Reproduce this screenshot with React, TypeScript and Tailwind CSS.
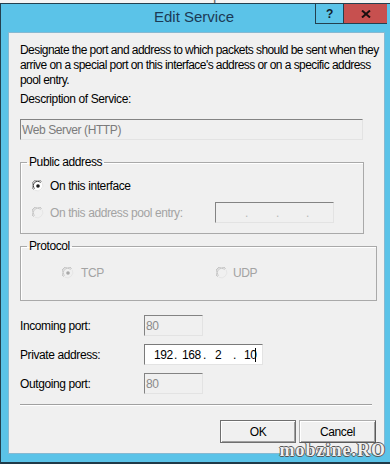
import type { ReactNode } from "react";

function Radio({ checked, disabled }: { checked?: boolean; disabled?: boolean }) {
  const outerDark = disabled ? "#b4b4b4" : "#7a7a7a";
  const innerDark = disabled ? "#c8c8c8" : "#404040";
  const dot = disabled ? "#a8a8a8" : "#1a1a1a";
  return (
    <svg width="12" height="12" viewBox="0 0 12 12" className="shrink-0">
      <circle cx="6" cy="6" r="5" fill={disabled ? "#f0f0f0" : "#ffffff"} />
      <path d="M1.5 9.5 A5.5 5.5 0 0 1 9.5 1.5" fill="none" stroke={outerDark} strokeWidth="1" />
      <path d="M2.6 8.6 A4.2 4.2 0 0 1 8.6 2.6" fill="none" stroke={innerDark} strokeWidth="1" />
      <path d="M10.2 2.8 A5.5 5.5 0 0 1 2.8 10.2" fill="none" stroke="#e6e6e6" strokeWidth="1" />
      {checked && <circle cx="6" cy="6" r="1.8" fill={dot} />}
    </svg>
  );
}

function Group({ title, width, children }: { title: string; width: string; children: ReactNode }) {
  return (
    <fieldset className={["border border-[#a9a9a9] shadow-[inset_1px_1px_0_#ffffff]", width].join(" ")}>
      <legend className="ml-[6px] px-[2px] leading-[15px] text-[#000]">{title}</legend>
      {children}
    </fieldset>
  );
}

const sunken = "border border-t-[#838383] border-l-[#838383] border-b-[#e3e3e3] border-r-[#e3e3e3]";

function PortRow({ label, children }: { label: string; children: ReactNode }) {
  return (
    <div className="flex h-[21px] items-center">
      <div className="w-[124px]">{label}</div>
      {children}
    </div>
  );
}

export default function App() {
  return (
    <div className="h-[464px] w-[390px] overflow-hidden bg-white font-['Liberation_Sans',Arial,sans-serif] text-[12px] tracking-[-0.4px] text-black">
      {/* window behind, only its title bottom shows */}
      <div className="h-[3px] overflow-hidden bg-[#f4f4f4]">
        <div className="-mt-[13px] text-center text-[15px] leading-[15px] text-[#6a6a6a]">Forward Properties</div>
      </div>

      <div className="flex h-[461px] flex-col border-l border-t border-[#23404f] bg-[#5bc3e8]">
        <div className="flex h-[28px] shrink-0">
          <div className="flex flex-1 items-center justify-center pb-[2px] pl-[72px] text-[15px] tracking-normal text-[#1b3a55]">Edit Service</div>
          <div className="flex h-[20px] w-[28px] items-center justify-center border-b border-l border-[#23404f] bg-[#5bc3e8] text-[12px] font-bold text-[#10202c]">
            ?
          </div>
          <div className="mr-[3px] flex h-[20px] w-[44px] items-center justify-center border-b border-l border-[#23404f] bg-[#c7504f]">
            <svg width="10" height="8" viewBox="0 0 10 8">
              <path d="M1 0.5 L9 7.5 M9 0.5 L1 7.5" stroke="#1a0f0f" strokeWidth="2" />
            </svg>
          </div>
        </div>

        <div className="ml-[7px] mr-[5px] flex flex-1 flex-col border border-[#86b9d2] bg-[#f0f0f0] pl-[11px]">
          <p className="mt-[10px] whitespace-nowrap leading-[15px] tracking-[-0.56px]">
            Designate the port and address to which packets should be sent when they
            <br />
            arrive on a special port on this interface's address or on a specific address
            <br />
            pool entry.
          </p>
          <div className="mt-[4px] leading-[15px]">Description of Service:</div>
          <div className={["mt-[12px] flex h-[21px] w-[343px] items-center bg-[#f0f0f0] pl-[1px] text-[#7b7b7b]", sunken].join(" ")}>
            Web Server (HTTP)
          </div>

          <div className="mt-[15px]">
            <Group title="Public address" width="w-[344px]">
              <div className="flex flex-col gap-[8px] pb-[10px] pl-[11px] pt-[8px]">
                <div className="flex h-[16px] items-center gap-[6px]">
                  <Radio checked />
                  <span>On this interface</span>
                </div>
                <div className="flex h-[21px] items-center">
                  <div className="flex w-[183px] items-center gap-[6px] text-[#a3a3a3]">
                    <Radio disabled />
                    <span>On this address pool entry:</span>
                  </div>
                  <div className={["flex h-[21px] w-[119px] items-center bg-[#f0f0f0] text-[#b8b8b8]", sunken].join(" ")}>
                    <span className="ml-[29px]">.</span>
                    <span className="ml-[28px]">.</span>
                    <span className="ml-[27px]">.</span>
                  </div>
                </div>
              </div>
            </Group>
          </div>

          <div className="mt-[5px]">
            <Group title="Protocol" width="w-[357px]">
              <div className="mb-[19px] mt-[11px] flex h-[16px] items-center pl-[41px] text-[#a3a3a3]">
                <div className="flex w-[154px] items-center gap-[7px]">
                  <Radio checked disabled />
                  <span>TCP</span>
                </div>
                <div className="flex items-center gap-[5px]">
                  <Radio disabled />
                  <span>UDP</span>
                </div>
              </div>
            </Group>
          </div>

          <div className="mt-[14px] flex flex-col gap-[8px]">
            <PortRow label="Incoming port:">
              <div className={["flex h-[21px] w-[59px] items-center pl-[1px] text-[#8a8a8a]", sunken].join(" ")}>80</div>
            </PortRow>
            <PortRow label="Private address:">
              <div className="flex h-[21px] w-[119px] items-center border border-[#7a7a7a] border-b-[#e3e3e3] border-r-[#e3e3e3] bg-white">
                <span className="ml-[9px] w-[20px]">192</span>
                <span className="w-[8px]">.</span>
                <span className="w-[21px]">168</span>
                <span className="w-[12px]">.</span>
                <span className="w-[18px]">2</span>
                <span className="w-[11px]">.</span>
                <span className="w-[11px]">10</span>
                <span className="h-[14px] w-[1px] bg-black" />
              </div>
            </PortRow>
            <PortRow label="Outgoing port:">
              <div className={["flex h-[21px] w-[59px] items-center pl-[1px] text-[#8a8a8a]", sunken].join(" ")}>80</div>
            </PortRow>
          </div>

          <div className="mt-[10px] h-[2px] w-[352px] border-b border-t border-b-white border-t-[#a0a0a0]" />

          <div className="mt-[14px] flex justify-end gap-[3px] pr-[8px]">
            <button
              type="button"
              className="h-[23px] w-[76px] border border-[#6f6f6f] bg-[#f0f0f0] shadow-[inset_1px_1px_0_#ffffff,inset_-1px_-1px_0_#a0a0a0]"
            >
              OK
            </button>
            <button
              type="button"
              className="h-[23px] w-[77px] border border-[#adadad] border-b-[#5a5a5a] border-r-[#5a5a5a] bg-[#f0f0f0] shadow-[inset_1px_1px_0_#ffffff,inset_-1px_-1px_0_#a0a0a0]"
            >
              Cancel
            </button>
          </div>
        </div>

        <div className="relative h-[8px] shrink-0">
          <div className="absolute -top-[13px] right-[4px] font-['Liberation_Serif',serif] text-[18px] font-bold leading-[18px] tracking-[1px] text-[#eeeeee] [text-shadow:1px_0_0_#555,-1px_0_0_#555,0_1px_0_#555,0_-1px_0_#555]">
            mobzine.RO
          </div>
        </div>
        <div className="h-[2px] shrink-0 bg-[#1f3a48]" />
      </div>
    </div>
  );
}
